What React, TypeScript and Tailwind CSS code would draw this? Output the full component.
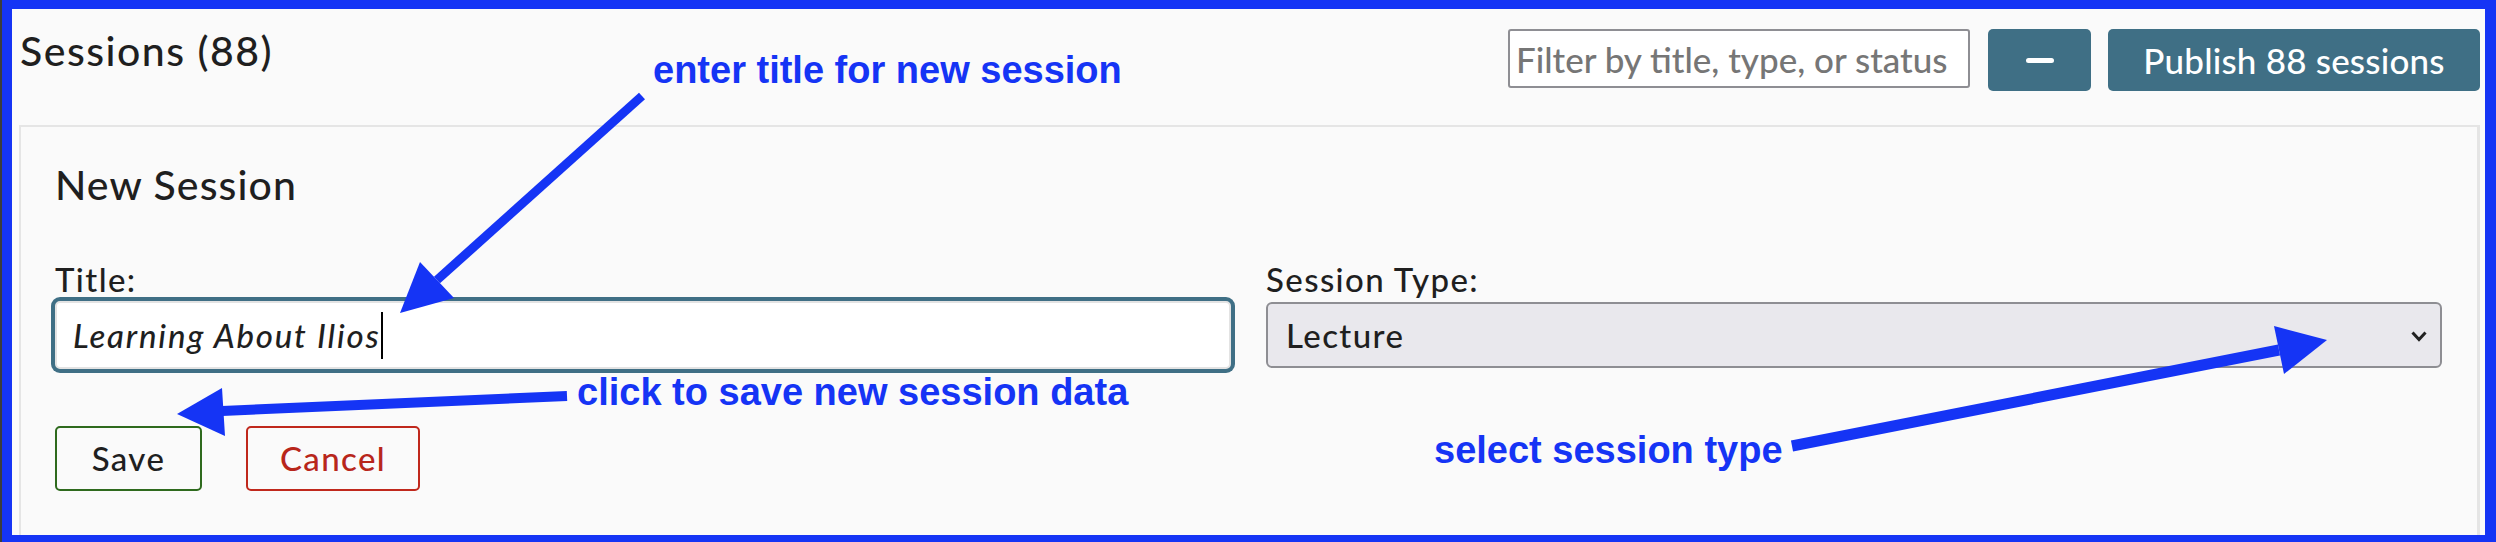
import React from "react";

const BLUE = "#1534f5";

export default function App() {
  return (
    <div className="relative w-[2496px] h-[542px] overflow-hidden bg-[#fafafa] text-[#1f1f1f] font-['Lato','Noto_Sans',sans-serif] font-medium">
      <div className="h-full border-l-2 border-[#3c3c3c]">
        <div className="h-full flex flex-col overflow-hidden border-t-[9px] border-l-[10px] border-r-[11px] border-b-[7px] border-[#1534f5] pl-[7px] pr-[5px]">
          {/* header */}
          <div className="flex items-start justify-between pt-[20px]">
            <h2 className="mt-[1px] pl-[1px] text-[41px] leading-none font-medium tracking-[1.5px]">Sessions (88)</h2>
            <div className="flex items-start">
              <input
                readOnly
                placeholder="Filter by title, type, or status"
                className="w-[462px] h-[59px] border-2 border-[#8e8e93] rounded-[3px] bg-white px-[6px] text-[35px] leading-none outline-none placeholder:text-[#767676]"
              />
              <button className="ml-[18px] w-[103px] h-[62px] rounded-[5px] bg-[#3f6f85] flex items-center justify-center">
                <span className="block w-[28px] h-[5px] rounded-full bg-white" />
              </button>
              <button className="ml-[17px] w-[372px] h-[62px] rounded-[5px] bg-[#3f6f85] text-white text-[35px] leading-none tracking-[0.2px]">
                Publish 88 sessions
              </button>
            </div>
          </div>

          {/* new session box */}
          <div className="mt-[34px] flex-1 border-t-2 border-l-2 border-r-[3px] border-[#e5e5e5] pl-[34px] pr-[35px] pt-[37px] pb-[60px]">
            <h3 className="text-[41px] leading-none font-medium tracking-[1.1px]">New Session</h3>
            <div className="mt-[58px] grid grid-cols-2 gap-x-[35px] text-[33px] tracking-[1.4px]">
              <div>
                <label className="block leading-none">Title:</label>
                <div className="mt-[5px] h-[68px] border-2 border-[#e3e3e3] rounded-[5px] bg-white shadow-[0_0_0_4px_#3f6f85] flex items-center pl-[16px] italic leading-none tracking-[1.8px]">
                  <span>Learning About Ilios</span>
                  <span className="inline-block w-[2px] h-[47px] bg-black ml-[1px]" />
                </div>
              </div>
              <div>
                <label className="block leading-none">Session Type:</label>
                <div className="mt-[6px] h-[66px] border-2 border-[#8e8e93] rounded-[6px] bg-[#e9e8ed] flex items-center justify-between pl-[18px] pr-[13px] leading-none">
                  <span>Lecture</span>
                  <svg width="16" height="11" viewBox="0 0 16 11" fill="none" className="mt-[2px]">
                    <path d="M1.5 1.5 L8 8.5 L14.5 1.5" stroke="#222" strokeWidth="3" />
                  </svg>
                </div>
              </div>
            </div>
            <div className="mt-[57px] flex gap-[44px] text-[33px] tracking-[1.4px]">
              <button className="w-[147px] h-[65px] border-2 border-[#2e6a1d] rounded-[5px] leading-none text-[#1f1f1f]">
                Save
              </button>
              <button className="w-[174px] h-[65px] border-2 border-[#c0281c] rounded-[5px] leading-none text-[#b8261b]">
                Cancel
              </button>
            </div>
          </div>
        </div>
      </div>

      {/* annotations */}
      <svg className="absolute left-0 top-0 pointer-events-none" width="2496" height="542" viewBox="0 0 2496 542">
        <line x1="642" y1="96" x2="437" y2="280" stroke={BLUE} strokeWidth="9" />
        <polygon points="400,313 420,262 454,298" fill={BLUE} />
        <line x1="567" y1="396" x2="222" y2="411" stroke={BLUE} strokeWidth="10" />
        <polygon points="177,414 222,388 225,436" fill={BLUE} />
        <line x1="1792" y1="446" x2="2279" y2="350" stroke={BLUE} strokeWidth="11" />
        <polygon points="2327,340 2274,326 2284,374" fill={BLUE} />
      </svg>
      <div className="absolute left-[653px] top-[51px] text-[38px] leading-none font-bold text-[#1534f5] whitespace-nowrap font-['Liberation_Sans',Arial,sans-serif]">
        enter title for new session
      </div>
      <div className="absolute left-[577px] top-[373px] text-[38px] leading-none font-bold text-[#1534f5] whitespace-nowrap font-['Liberation_Sans',Arial,sans-serif]">
        click to save new session data
      </div>
      <div className="absolute left-[1434px] top-[431px] text-[38px] leading-none font-bold text-[#1534f5] whitespace-nowrap font-['Liberation_Sans',Arial,sans-serif]">
        select session type
      </div>
    </div>
  );
}
